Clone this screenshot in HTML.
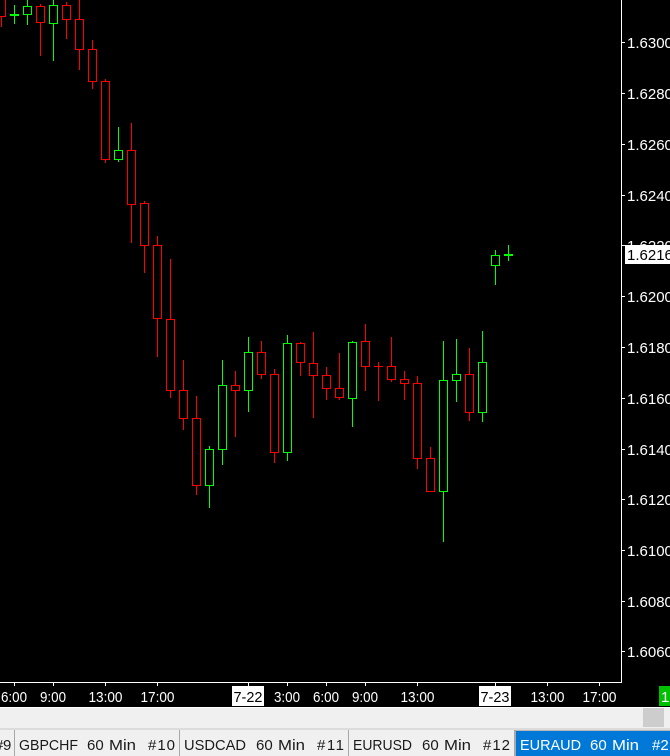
<!DOCTYPE html>
<html><head><meta charset="utf-8"><style>
html,body{margin:0;padding:0;background:#000;width:670px;height:756px;overflow:hidden}
svg{display:block}
text{font-family:"Liberation Sans",sans-serif}
.p{font-size:15px;fill:#fff}
.t{font-size:15px;fill:#fff;text-anchor:middle}
.b{font-size:15px;fill:#1a1a1a}
.a{font-size:15px;fill:#fff}
</style></head><body>
<svg width="670" height="756" viewBox="0 0 670 756" xmlns="http://www.w3.org/2000/svg">
<rect width="670" height="756" fill="#000"/>
<g shape-rendering="crispEdges">
<path fill="none" stroke="#f00" d="M1.5 0V27M40.5 4V56M66.5 2V39M79.5 0V70M92.5 40V89M105.5 79V163M131.5 123V243M144.5 201V273M157.5 236V357M170.5 259V398M183.5 360V430M196.5 396V495M235.5 371V437M261.5 341V379M274.5 369V463M300.5 342V376M313.5 332V418M326.5 367V400M339.5 353V400M365.5 324V391M378.5 362V401M391.5 337V382M404.5 371V400M417.5 376V469M430.5 447V491M469.5 348V421"/>
<path fill="none" stroke="#0f0" d="M14.5 5V24M27.5 0V25M53.5 0V61M118.5 127V162M209.5 446V508M222.5 360V465M248.5 337V412M287.5 335V461M352.5 341V427M443.5 341V542M456.5 339V402M482.5 331V422M495.5 250V285M508.5 245V261"/>
<path fill="#000" stroke="#f00" d="M-2.5 -1.5h8v18h-8zM36.5 6.5h8v16h-8zM62.5 5.5h8v14h-8zM75.5 19.5h8v30h-8zM88.5 49.5h8v32h-8zM101.5 81.5h8v78h-8zM127.5 150.5h8v54h-8zM140.5 203.5h8v42h-8zM153.5 245.5h8v73h-8zM166.5 319.5h8v71h-8zM179.5 390.5h8v28h-8zM192.5 418.5h8v67h-8zM231.5 385.5h8v5h-8zM257.5 352.5h8v22h-8zM270.5 374.5h8v78h-8zM296.5 343.5h8v19h-8zM309.5 363.5h8v12h-8zM322.5 375.5h8v13h-8zM335.5 388.5h8v9h-8zM361.5 341.5h8v25h-8zM387.5 366.5h8v13h-8zM400.5 379.5h8v4h-8zM413.5 383.5h8v75h-8zM426.5 458.5h8v33h-8zM465.5 374.5h8v38h-8z"/>
<rect x="374" y="366" width="9" height="1" fill="#f00"/>
<path fill="#000" stroke="#0f0" d="M23.5 6.5h8v8h-8zM49.5 5.5h8v18h-8zM114.5 150.5h8v9h-8zM205.5 449.5h8v36h-8zM218.5 385.5h8v64h-8zM244.5 352.5h8v38h-8zM283.5 343.5h8v109h-8zM348.5 342.5h8v56h-8zM439.5 380.5h8v111h-8zM452.5 374.5h8v6h-8zM478.5 362.5h8v50h-8zM491.5 255.5h8v10h-8z"/>
<rect x="10" y="14" width="9" height="2" fill="#0f0"/>
<rect x="504" y="254" width="9" height="2" fill="#0f0"/>
<rect x="621" y="0" width="1" height="683" fill="#fff"/>
<rect x="0" y="682" width="621" height="1" fill="#fff"/>
<path stroke="#fff" fill="none" d="M622 42.5h3M622 93.5h3M622 144.5h3M622 195.5h3M622 245.5h3M622 296.5h3M622 347.5h3M622 398.5h3M622 449.5h3M622 499.5h3M622 550.5h3M622 601.5h3M622 651.5h3"/>
<path stroke="#fff" fill="none" d="M14.5 683v3M53.5 683v3M105.5 683v3M157.5 683v3M248.5 683v3M287.5 683v3M326.5 683v3M365.5 683v3M417.5 683v3M495.5 683v3M547.5 683v3M599.5 683v3"/>
</g>
<text class="p" x="627" y="48">1.6300</text>
<text class="p" x="627" y="99">1.6280</text>
<text class="p" x="627" y="150">1.6260</text>
<text class="p" x="627" y="201">1.6240</text>
<text class="p" x="627" y="251">1.6220</text>
<text class="p" x="627" y="302">1.6200</text>
<text class="p" x="627" y="353">1.6180</text>
<text class="p" x="627" y="404">1.6160</text>
<text class="p" x="627" y="455">1.6140</text>
<text class="p" x="627" y="505">1.6120</text>
<text class="p" x="627" y="556">1.6100</text>
<text class="p" x="627" y="607">1.6080</text>
<text class="p" x="627" y="657">1.6060</text>
<rect x="625" y="245" width="45" height="19" fill="#fff" shape-rendering="crispEdges"/>
<text x="627" y="260" style="font-size:15px;fill:#000">1.6216</text>
<rect x="232" y="686" width="32" height="20" fill="#fff" shape-rendering="crispEdges"/>
<rect x="479" y="686" width="32" height="20" fill="#fff" shape-rendering="crispEdges"/>
<rect x="659" y="686" width="11" height="20" fill="#00c000" shape-rendering="crispEdges"/>
<text class="t" x="14" y="702" textLength="26" lengthAdjust="spacingAndGlyphs">6:00</text>
<text class="t" x="53" y="702" textLength="26" lengthAdjust="spacingAndGlyphs">9:00</text>
<text class="t" x="105.5" y="702" textLength="34" lengthAdjust="spacingAndGlyphs">13:00</text>
<text class="t" x="157.5" y="702" textLength="34" lengthAdjust="spacingAndGlyphs">17:00</text>
<text class="t" x="248" y="702" textLength="29" lengthAdjust="spacingAndGlyphs" style="fill:#000">7-22</text>
<text class="t" x="287" y="702" textLength="26" lengthAdjust="spacingAndGlyphs">3:00</text>
<text class="t" x="326" y="702" textLength="26" lengthAdjust="spacingAndGlyphs">6:00</text>
<text class="t" x="365" y="702" textLength="26" lengthAdjust="spacingAndGlyphs">9:00</text>
<text class="t" x="417.5" y="702" textLength="34" lengthAdjust="spacingAndGlyphs">13:00</text>
<text class="t" x="495" y="702" textLength="29" lengthAdjust="spacingAndGlyphs" style="fill:#000">7-23</text>
<text class="t" x="547.5" y="702" textLength="34" lengthAdjust="spacingAndGlyphs">13:00</text>
<text class="t" x="599.5" y="702" textLength="34" lengthAdjust="spacingAndGlyphs">17:00</text>
<text x="661" y="702" style="font-size:15px;fill:#fff">1</text>
<g shape-rendering="crispEdges">
<rect x="0" y="707" width="670" height="49" fill="#f0f0f0"/>
<rect x="0" y="707" width="670" height="1" fill="#fff"/>
<rect x="643" y="708" width="21" height="19" fill="#cdcdcd"/>
<rect x="0" y="728" width="670" height="2" fill="#dcdcdc"/>
<rect x="14" y="730" width="1" height="26" fill="#a8a8a8"/>
<rect x="179" y="730" width="1" height="26" fill="#a8a8a8"/>
<rect x="348" y="730" width="1" height="26" fill="#a8a8a8"/>
<rect x="514" y="730" width="156" height="1" fill="#b8b8b8"/>
<rect x="514" y="730" width="2" height="26" fill="#a8a8a8"/>
<rect x="516" y="731" width="154" height="25" fill="#0078d7"/>
</g>
<text class="b" x="-5" y="750">#</text>
<text class="b" x="3" y="750">9</text>
<text class="b" x="19" y="750" textLength="59" lengthAdjust="spacingAndGlyphs">GBPCHF</text>
<text class="b" x="87" y="750">60</text>
<text class="b" x="109" y="750" textLength="27" lengthAdjust="spacingAndGlyphs">Min</text>
<text class="b" x="148" y="750" textLength="27">#10</text>
<text class="b" x="184" y="750" textLength="62" lengthAdjust="spacingAndGlyphs">USDCAD</text>
<text class="b" x="256" y="750">60</text>
<text class="b" x="278" y="750" textLength="27" lengthAdjust="spacingAndGlyphs">Min</text>
<text class="b" x="317" y="750" textLength="27">#11</text>
<text class="b" x="353" y="750" textLength="59" lengthAdjust="spacingAndGlyphs">EURUSD</text>
<text class="b" x="422" y="750">60</text>
<text class="b" x="444" y="750" textLength="27" lengthAdjust="spacingAndGlyphs">Min</text>
<text class="b" x="483" y="750" textLength="27">#12</text>
<text class="a" x="520" y="750" textLength="61" lengthAdjust="spacingAndGlyphs">EURAUD</text>
<text class="a" x="590" y="750">60</text>
<text class="a" x="612" y="750" textLength="27" lengthAdjust="spacingAndGlyphs">Min</text>
<text class="a" x="652" y="750">#2</text>
</svg>
</body></html>
